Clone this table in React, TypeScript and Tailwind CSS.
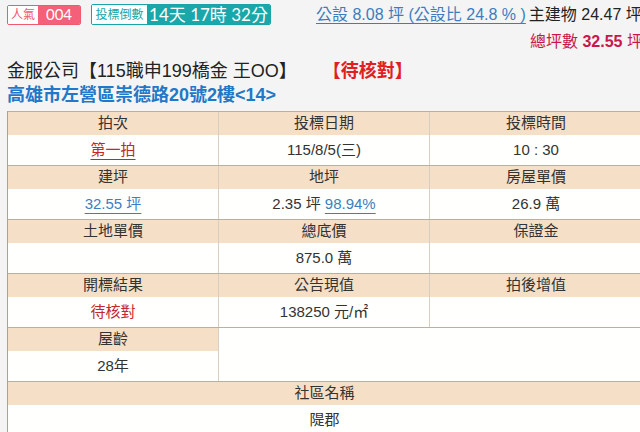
import React from "react";

const F = "font-['Liberation_Sans','Noto_Sans_CJK_TC',sans-serif]";

function H({ children, last }: { children?: React.ReactNode; last?: boolean }) {
  return (
    <div
      className={`h-[23px] flex items-center justify-center text-[15px] text-[#333] bg-[#f6dfc7] ${last ? "" : "border-r border-[#d9cfc1]"}`}
    >
      {children}
    </div>
  );
}
function V({ children, last }: { children?: React.ReactNode; last?: boolean }) {
  return (
    <div
      className={`h-[30px] flex items-center justify-center text-[15px] text-[#333] bg-[#fffffd] ${last ? "" : "border-r border-[#d9cfc1]"}`}
    >
      {children}
    </div>
  );
}

function Group({ h, v }: { h: React.ReactNode[]; v: React.ReactNode[] }) {
  return (
    <div className="border-t border-[#b9b0a2]">
      <div className="grid grid-cols-[211px_211px_212px]">
        {h.map((x, i) => (
          <H key={i} last={i === 2}>
            {x}
          </H>
        ))}
      </div>
      <div className="grid grid-cols-[211px_211px_212px]">
        {v.map((x, i) => (
          <V key={i} last={i === 2}>
            {x}
          </V>
        ))}
      </div>
    </div>
  );
}

export default function App() {
  return (
    <div className={`w-[640px] h-[432px] overflow-hidden bg-[#f4f4f4] ${F}`}>
      {/* top row */}
      <div className="flex items-start h-[58px] relative">
        <div className="flex items-center pt-[4px] pl-[7px] font-['Lato','Noto_Sans_CJK_TC',sans-serif]">
          <div className="flex h-[20px] border border-[#ee5a70] rounded-[2px] overflow-hidden">
            <div className="w-[30px] bg-white text-[#ee5a70] text-[12px] flex items-center justify-center">人氣</div>
            <div className="w-[42px] bg-[#f4607a] text-white text-[15px] flex items-center justify-center">004</div>
          </div>
          <div className="flex h-[21px] ml-[10px] border border-[#19a4a6] rounded-[2px] overflow-hidden">
            <div className="w-[55px] bg-white text-[#19a4a6] text-[12px] flex items-center justify-center">投標倒數</div>
            <div className="w-[123px] bg-[#19a7aa] text-white text-[17px] flex items-center justify-center">14天 17時 32分</div>
          </div>
        </div>
        <div className="absolute left-[316px] top-[5px] whitespace-nowrap text-[16px] leading-[20px]">
          <div className="flex">
            <span className="text-[#3b7dc0] underline underline-offset-[3px] decoration-[#3b7dc0]">公設 8.08 坪 (公設比 24.8 % )</span>
            <span className="text-[#222] ml-[3px]">主建物 24.47 坪</span>
          </div>
          <div className="mt-[7px] pl-[214px] text-[#c8174a]">
            總坪數 <span className="font-bold">32.55</span> 坪
          </div>
        </div>
      </div>
      {/* title */}
      <div className="pl-[7px] flex items-center h-[26px] text-[18px] text-[#222] whitespace-nowrap">
        <span>金服公司【115職申199橋金 王OO】</span>
        <span className="ml-[26px] text-[#e0201f] font-bold">【待核對】</span>
      </div>
      <div className="pl-[7px] h-[22px] flex items-center text-[18px] font-bold text-[#1f78c8] whitespace-nowrap">
        高雄市左營區崇德路20號2樓&lt;14&gt;
      </div>
      {/* table */}
      <div className="ml-[7px] mt-[5px] w-[634px] border-l border-[#aaa398]">
        <Group
          h={["拍次", "投標日期", "投標時間"]}
          v={[
            <span className="text-[#c3262c] underline underline-offset-[4px]">第一拍</span>,
            "115/8/5(三)",
            "10 : 30",
          ]}
        />
        <Group
          h={["建坪", "地坪", "房屋單價"]}
          v={[
            <span className="text-[#3a7fc0] underline underline-offset-[4px]">32.55 坪</span>,
            <span>
              2.35 坪 <span className="text-[#3a7fc0] underline underline-offset-[4px]">98.94%</span>
            </span>,
            "26.9 萬",
          ]}
        />
        <Group h={["土地單價", "總底價", "保證金"]} v={["", "875.0 萬", ""]} />
        <Group
          h={["開標結果", "公告現值", "拍後增值"]}
          v={[<span className="text-[#c3262c]">待核對</span>, "138250 元/㎡", ""]}
        />
        <div className="border-t border-[#b9b0a2] flex">
          <div className="w-[211px] border-r border-[#d9cfc1]">
            <div className="h-[23px] flex items-center justify-center text-[15px] text-[#333] bg-[#f6dfc7]">屋齡</div>
            <div className="h-[30px] flex items-center justify-center text-[15px] text-[#333] bg-[#fffffd]">28年</div>
          </div>
          <div className="flex-1 bg-[#fffffd]" />
        </div>
        <div className="border-t border-[#b9b0a2]">
          <div className="h-[23px] flex items-center justify-center text-[15px] text-[#333] bg-[#f6dfc7]">社區名稱</div>
          <div className="h-[30px] flex items-center justify-center text-[15px] text-[#333] bg-[#fffffd]">隄郡</div>
        </div>
      </div>
    </div>
  );
}
